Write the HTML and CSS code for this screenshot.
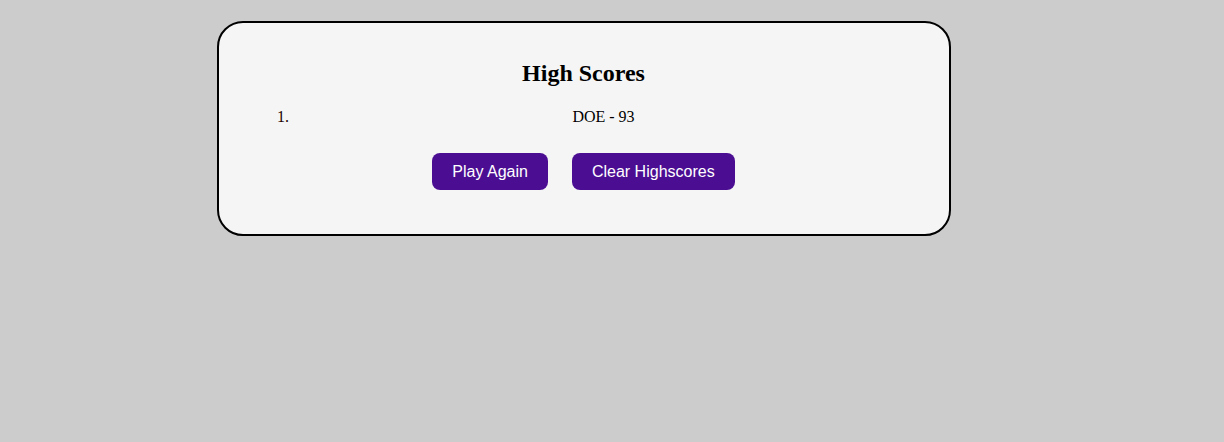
FILE: index.html
```html
<!DOCTYPE html>
<html>
<head>
<meta charset="utf-8">
<link rel="stylesheet" href="styles.css">
</head>
<body>
<main class="card">
  <h2 class="title">High Scores</h2>
  <ol class="scores">
    <li class="score">DOE - 93</li>
  </ol>
  <div class="actions">
    <button class="btn">Play Again</button>
    <button class="btn">Clear Highscores</button>
  </div>
</main>
</body>
</html>
```
FILE: styles.css
```css
html, body {
  margin: 0;
  padding: 0;
  background: #cccccc;
}
body {
  font-family: "Liberation Serif", serif;
  padding-top: 21px;
}
.card {
  box-sizing: border-box;
  margin-left: 217px;
  width: 734px;
  height: 215px;
  background: #f5f5f5;
  border: 2px solid #000;
  border-radius: 26px;
  padding: 35px 35px 0 34px;
}
.title {
  margin: 0;
  text-align: center;
  font-size: 24px;
  font-weight: bold;
  line-height: 30px;
  color: #000;
}
.scores {
  margin: 19px 0 0;
  padding-left: 40px;
}
.score {
  text-align: center;
  font-size: 16px;
  line-height: 20px;
  color: #000;
}
.score::marker {
  color: #200;
}
.actions {
  display: flex;
  justify-content: center;
  gap: 24px;
  margin-top: 26px;
}
.btn {
  font-family: "Liberation Sans", Arial, sans-serif;
  font-size: 16px;
  color: #fff;
  background: #4b0e93;
  border: none;
  border-radius: 8px;
  height: 37px;
  padding: 0 20px;
}
```
